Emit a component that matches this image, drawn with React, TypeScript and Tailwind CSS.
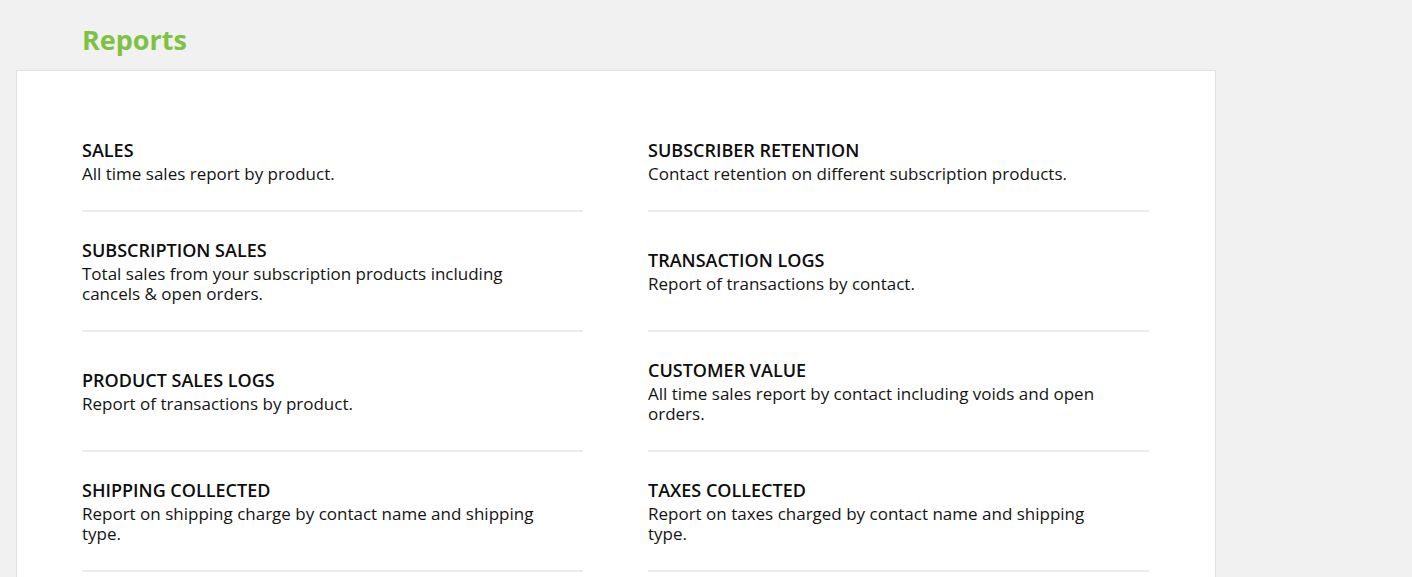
const reports = [
  { title: "SALES", text: "All time sales report by product." },
  {
    title: "SUBSCRIBER RETENTION",
    text: "Contact retention on different subscription products.",
  },
  {
    title: "SUBSCRIPTION SALES",
    text: "Total sales from your subscription products including cancels & open orders.",
  },
  { title: "TRANSACTION LOGS", text: "Report of transactions by contact." },
  { title: "PRODUCT SALES LOGS", text: "Report of transactions by product." },
  {
    title: "CUSTOMER VALUE",
    text: "All time sales report by contact including voids and open orders.",
  },
  {
    title: "SHIPPING COLLECTED",
    text: "Report on shipping charge by contact name and shipping type.",
  },
  {
    title: "TAXES COLLECTED",
    text: "Report on taxes charged by contact name and shipping type.",
  },
];

function ReportItem({ title, text }: { title: string; text: string }) {
  return (
    <a
      href="#"
      className="flex flex-col justify-center border-b-2 border-[#ececec] py-[26px] text-[#0d0d0d]"
    >
      <span className="text-[18px] leading-[24px] font-semibold">{title}</span>
      <span className="mt-[2px] max-w-[455px] text-[17px] leading-[20px] text-[#141414]">
        {text}
      </span>
    </a>
  );
}

export default function App() {
  return (
    <div
      className="min-h-screen bg-[#f1f1f1] pl-4"
      style={{ fontFamily: '"Open Sans", "Noto Sans", sans-serif' }}
    >
      <h1 className="pt-[21px] pl-[66px] pb-[11px] text-[27px] leading-[38px] font-bold text-[#7dc242]">
        Reports
      </h1>
      <div className="w-[1200px] border border-[#e0e0e0] bg-white pt-[41px] pr-[66px] pb-10 pl-[65px]">
        <div className="grid grid-cols-2 gap-x-[65px]">
          {reports.map((r) => (
            <ReportItem key={r.title} title={r.title} text={r.text} />
          ))}
        </div>
      </div>
    </div>
  );
}
